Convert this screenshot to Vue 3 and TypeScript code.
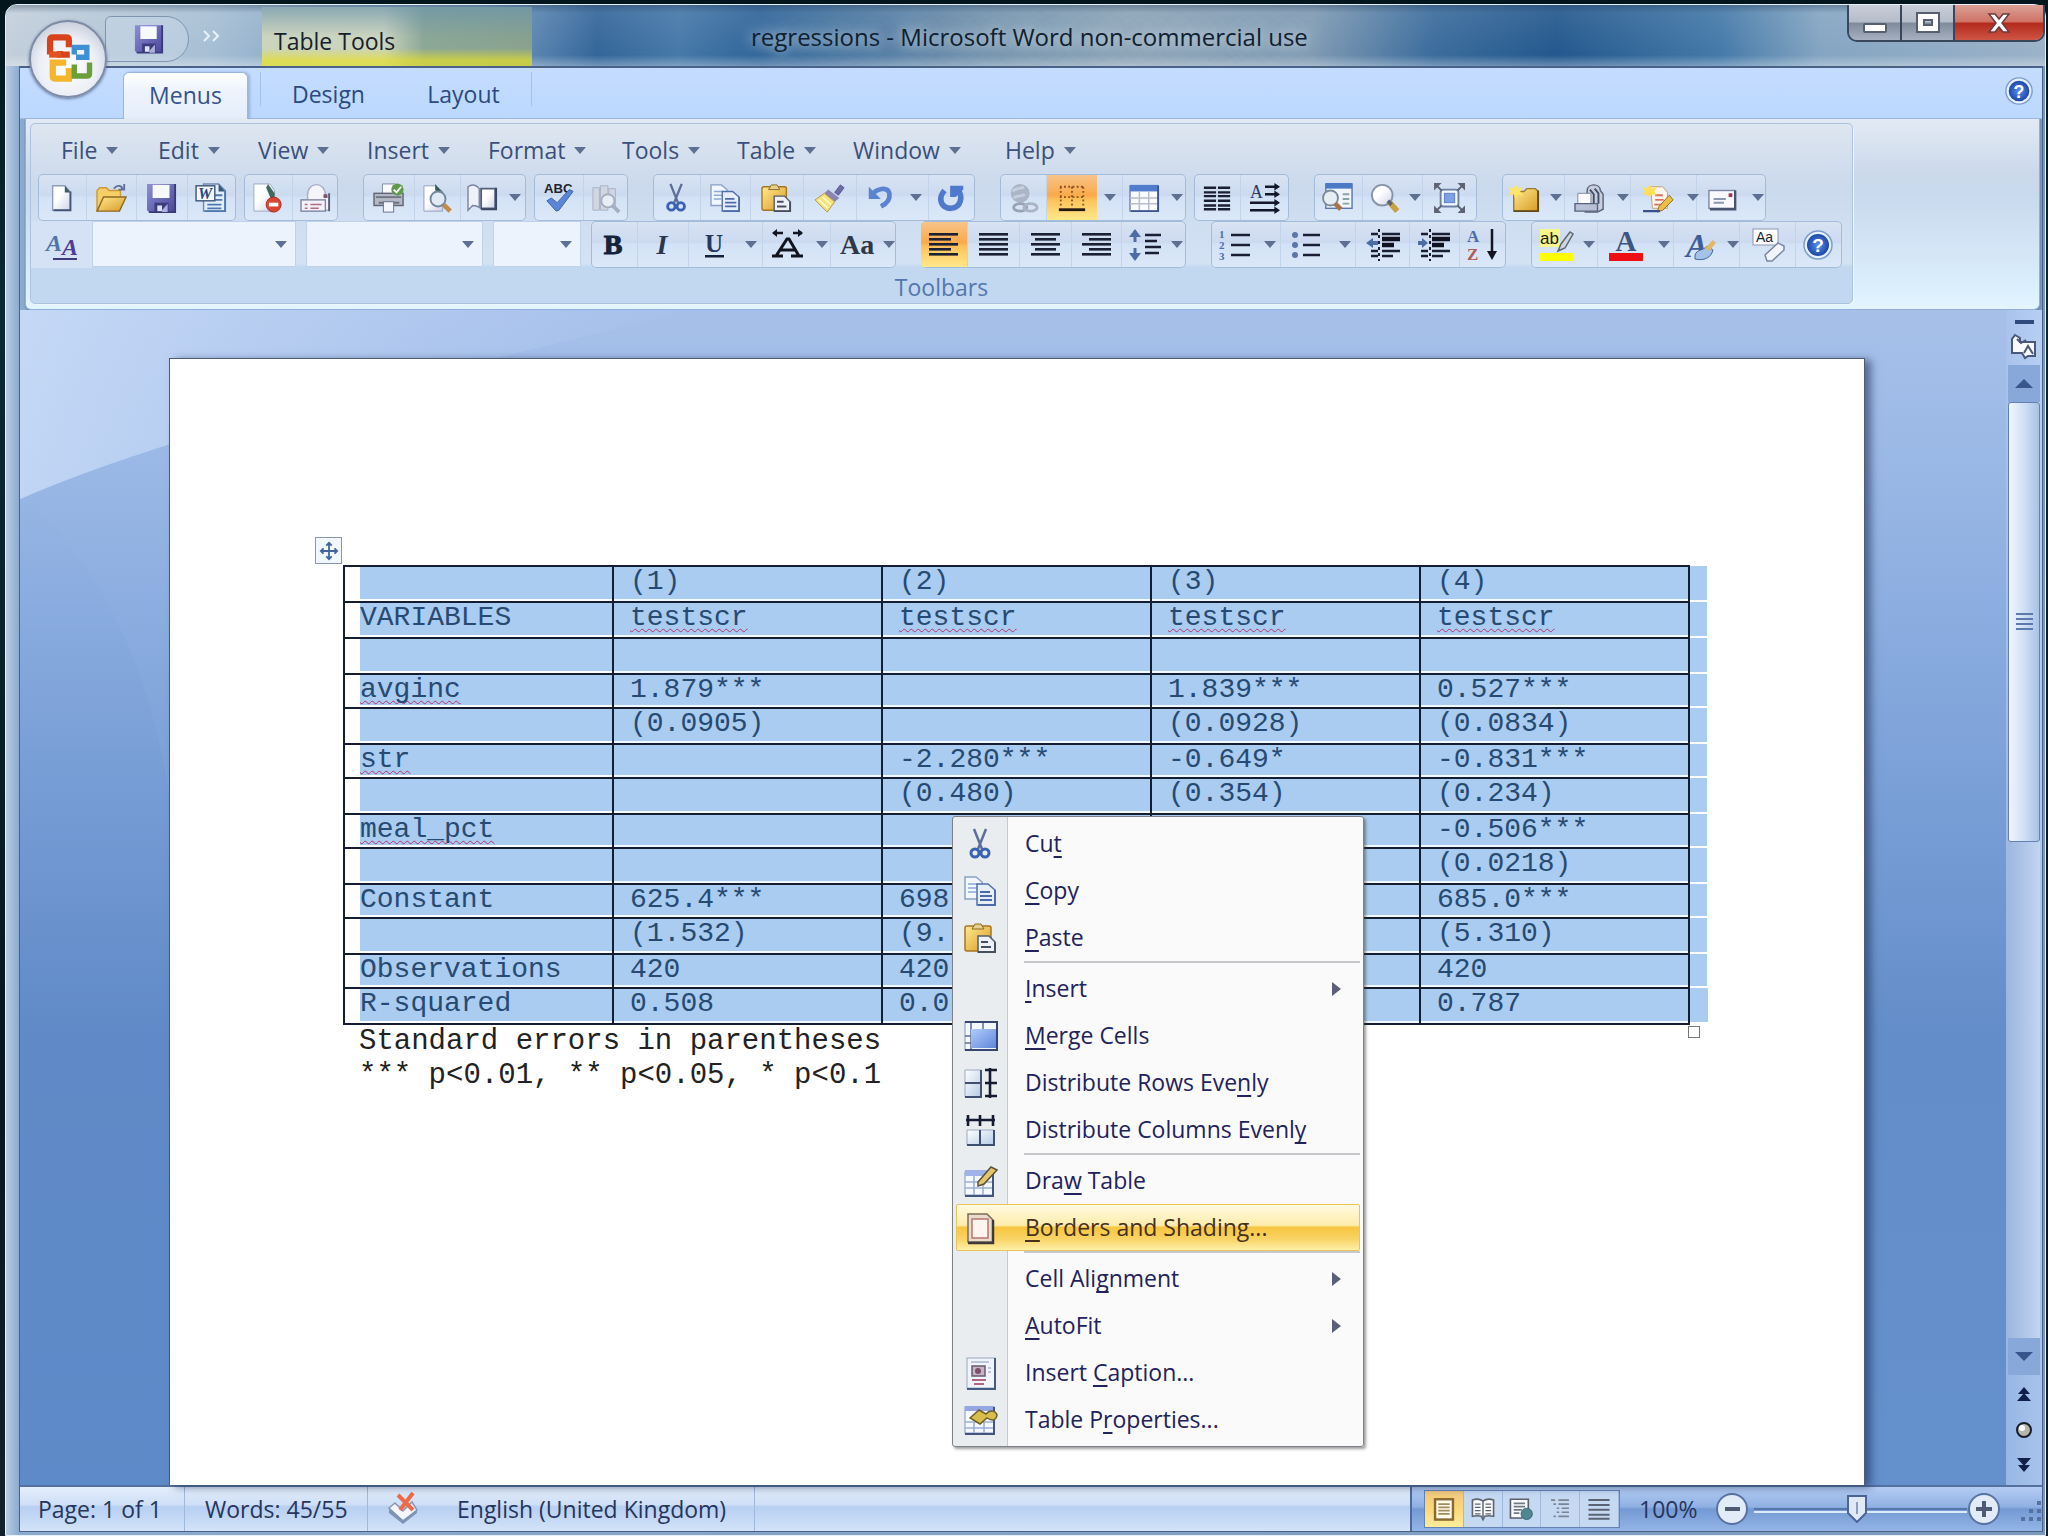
<script setup lang="ts">
import { ref } from 'vue'

interface Tool { icon?: string; label: string; w: number; drop?: boolean; on?: boolean }
type Segment = Tool[]

const drop = (label: string, w: number): Tool => ({ label, w, drop: true })
const tool = (icon: string, label: string, w: number, on = false): Tool => ({ icon, label, w, on })

const menus = [
  { label: 'File', w: 97 }, { label: 'Edit', w: 100 }, { label: 'View', w: 109 },
  { label: 'Insert', w: 121 }, { label: 'Format', w: 134 }, { label: 'Tools', w: 115 },
  { label: 'Table', w: 116 }, { label: 'Window', w: 152 }, { label: 'Help', w: 90 },
]

const standardBars: Segment[][] = [
  [
    [tool('page', 'New', 49), tool('folder', 'Open', 50), tool('disk', 'Save', 51), tool('word', 'Save As', 48)],
    [tool('permission', 'Permission', 49), tool('mail', 'E-mail', 45)],
  ],
  [
    [tool('printer', 'Print', 52), tool('preview', 'Print Preview', 46), tool('book', 'Reading', 43), drop('Reading options', 22)],
    [tool('spell', 'Spelling', 50), tool('research', 'Research', 44)],
  ],
  [[
    tool('cut', 'Cut', 48), tool('copy', 'Copy', 50), tool('paste', 'Paste', 53), tool('brush', 'Format Painter', 53),
    tool('undo', 'Undo', 46), drop('Undo list', 26), tool('redo', 'Repeat', 46),
  ]],
  [
    [tool('link', 'Hyperlink', 47), tool('borders', 'Borders', 50, true), drop('Border options', 26), tool('grid', 'Insert Table', 44), drop('Table options', 19)],
    [tool('columns', 'Columns', 47), tool('direction', 'Text Direction', 48)],
  ],
  [[tool('map', 'Document Map', 49), tool('zoom', 'Zoom', 45), drop('Zoom options', 15), tool('full', 'Full Screen', 54)]],
  [[
    tool('newfolder', 'New Group', 45), drop('Group options', 18), tool('stack', 'Print Batch', 50), drop('Batch options', 16),
    tool('newdoc', 'New Comment', 56), drop('Comment options', 10), tool('envelope', 'Envelope', 52), drop('Envelope options', 17),
  ]],
]

const formatBars: Segment[] = [
  [
    tool('bold', 'Bold', 47), tool('italic', 'Italic', 51), tool('underline', 'Underline', 51), drop('Underline style', 23),
    tool('scale', 'Character Scaling', 50), drop('Scaling options', 18), tool('case', 'Change Case', 50), drop('Case options', 15),
  ],
  [
    tool('left', 'Align Left', 47, true), tool('justify', 'Justify', 52), tool('center', 'Center', 52), tool('right', 'Align Right', 50),
    tool('spacing', 'Line Spacing', 45), drop('Spacing options', 19),
  ],
  [
    tool('numbers', 'Numbering', 48), drop('Numbering styles', 22), tool('bullets', 'Bullets', 53), drop('Bullet styles', 22),
    tool('outdent', 'Decrease Indent', 54), tool('indent', 'Increase Indent', 50), tool('sort', 'Sort', 46),
  ],
  [
    tool('highlight', 'Highlight', 49), drop('Highlight colors', 18), tool('color', 'Font Color', 56), drop('Font colors', 20),
    tool('style', 'Quick Styles', 52), drop('Style options', 14), tool('clear', 'Clear Formatting', 56), tool('help', 'Help', 46),
  ],
]

const combos = [
  { label: 'Style', w: 204 }, { label: 'Font', w: 177 }, { label: 'Font size', w: 88 },
]

const headRows = [
  ['', '(1)', '(2)', '(3)', '(4)'],
  ['VARIABLES', 'testscr', 'testscr', 'testscr', 'testscr'],
  ['', '', '', '', ''],
]
const bodyRows = [
  ['avginc', '1.879***', '', '1.839***', '0.527***'],
  ['', '(0.0905)', '', '(0.0928)', '(0.0834)'],
  ['str', '', '-2.280***', '-0.649*', '-0.831***'],
  ['', '', '(0.480)', '(0.354)', '(0.234)'],
  ['meal_pct', '', '', '', '-0.506***'],
  ['', '', '', '', '(0.0218)'],
  ['Constant', '625.4***', '698', '', '685.0***'],
  ['', '(1.532)', '(9.', '', '(5.310)'],
  ['Observations', '420', '420', '', '420'],
  ['R-squared', '0.508', '0.0', '', '0.787'],
]
const misspelt = new Set(['testscr', 'avginc', 'str', 'meal_pct'])

interface Entry { text: [string, string, string]; icon?: string; sub?: boolean; rule?: boolean; on?: boolean }
const entries: Entry[] = [
  { text: ['Cu', 't', ''], icon: 'cut' },
  { text: ['', 'C', 'opy'], icon: 'copy' },
  { text: ['', 'P', 'aste'], icon: 'paste' },
  { text: ['', 'I', 'nsert'], sub: true, rule: true },
  { text: ['', 'M', 'erge Cells'], icon: 'merge' },
  { text: ['Distribute Rows Eve', 'n', 'ly'], icon: 'rows' },
  { text: ['Distribute Columns Evenl', 'y', ''], icon: 'cols' },
  { text: ['Dra', 'w', ' Table'], icon: 'draw', rule: true },
  { text: ['', 'B', 'orders and Shading...'], icon: 'shading', on: true },
  { text: ['Cell Ali', 'g', 'nment'], sub: true, rule: true },
  { text: ['', 'A', 'utoFit'], sub: true },
  { text: ['Insert ', 'C', 'aption...'], icon: 'caption' },
  { text: ['Table P', 'r', 'operties...'], icon: 'props' },
]

const views = [
  { icon: 'vPrint', label: 'Print Layout', on: true },
  { icon: 'vRead', label: 'Full Screen Reading' },
  { icon: 'vWeb', label: 'Web Layout' },
  { icon: 'vOutline', label: 'Outline' },
  { icon: 'vDraft', label: 'Draft' },
]
const zoom = ref(48)

const bars = (rows: [number, number, number][]) =>
  rows.map(([x, y, w]) => `<rect x="${x}" y="${y}" width="${w}" height="2.6" fill="#1b2033"/>`).join('')
const ys = [4, 9, 14, 19, 24]

const icons: Record<string, string> = {
  page: '<path d="M7 3h13l6 7v19H7z" fill="url(#paper)" stroke="#8e9dbb" stroke-width="1.5"/><path d="M26 9v20H8" fill="none" stroke="#46557a" stroke-width="2"/><path d="M20 3l6 7h-6z" fill="#3f5c5f"/>',
  folder: '<path d="M1 30V8l3-3h7l3 3h12v7" fill="#f5cf66" stroke="#c99a37" stroke-width="1.500"/><path d="M1 30l7-15h24l-7 15z" fill="url(#gold)" stroke="#8d6a24" stroke-width="1.500"/><path d="M19 6c4-5 9-3 9 1m-4 0h6V1" fill="none" stroke="#5f6f99" stroke-width="2"/>',
  disk: '<path d="M1 1h30v30H3l-2-2z" fill="url(#violet)"/><path d="M31 1v30H3" fill="none" stroke="#3a3a78" stroke-width="2"/><rect x="7" y="2" width="18" height="14" fill="#f7f9ff"/><rect x="9" y="21" width="15" height="10" fill="#3d3c7e"/><rect x="12" y="24" width="5" height="6" fill="#dfe3f6"/><path d="M17 29l6-7v9h-6z" fill="#aab2dd"/>',
  word: '<path d="M8 1h16l7 7v22H8z" fill="#e3eefb" stroke="#6f8bb3" stroke-width="1.500"/><path d="M24 1v8h7" fill="#39577f"/><path d="M31 8v22H9M12 23h15M12 27h15M20 13h8M20 18h8" fill="none" stroke="#4e78ad" stroke-width="2"/><rect x="0" y="3" width="20" height="16" fill="#f4f7ff" stroke="#3c5579" stroke-width="1.500"/><text x="2" y="17" font-family="Liberation Serif" font-size="17" font-weight="700" font-style="italic" fill="#26477b">W</text>',
  permission: '<path d="M2 1h17l5 7v22H2z" fill="url(#paper)" stroke="#9aa8c2"/><path d="M17 1l7 10v8h-3l-6-14z" fill="#3f6a60"/><circle cx="23" cy="23" r="8" fill="#da4636" stroke="#a62a22"/><rect x="18" y="21" width="10" height="4" fill="#fff"/>',
  mail: '<path d="M8 13c0-15 19-15 19 0l4 3v13H8z" fill="#f5f4f8" stroke="#a8aec4" stroke-width="1.500"/><path d="M31 11v19" stroke="#565d78" stroke-width="2"/><rect x="25" y="12" width="4" height="4" fill="#7c5568"/><rect x="1" y="18" width="26" height="12" fill="#f2f2f9" stroke="#7d86a2" stroke-width="1.500"/><path d="M5 23h3M11 23h12M5 27h3M11 27h9" stroke="#b06d85" stroke-width="1.600"/>',
  printer: '<path d="M10 12V1h14v11" fill="#fbfcff" stroke="#7e879b"/><rect x="1" y="11" width="31" height="13" fill="#b4b8c2" stroke="#5f6572" stroke-width="1.500"/><path d="M3 15h27M6 21h22" stroke="#6c7280" stroke-width="2"/><rect x="11" y="20" width="11" height="11" fill="#f4f6fd" stroke="#62708f"/><circle cx="26" cy="7" r="6.500" fill="#5d9b4c"/><path d="M22 7l3 3 5-6" fill="none" stroke="#fff" stroke-width="2"/>',
  preview: '<path d="M2 3h12l8 6v21H2z" fill="url(#paper)" stroke="#8e9dbb"/><path d="M14 1l8 9-8-2z" fill="#335a52"/><circle cx="17" cy="17" r="8" fill="#dfeaf6" stroke="#74869c" stroke-width="2"/><path d="M23 23l7 7" stroke="#c48b46" stroke-width="5"/>',
  book: '<path d="M1 4c5-4 10-1 12 2v20c-3-2-5-2-7-2l-5 5z" fill="#eff1f8" stroke="#7b84a0" stroke-width="1.500"/><path d="M15 6h15v21H15z" fill="url(#paper)" stroke="#555e7c" stroke-width="2"/><path d="M31 5v23H15" fill="none" stroke="#3c4564" stroke-width="2"/>',
  spell: '<text x="1" y="11" font-family="Liberation Sans" font-size="14" font-weight="700" fill="#1e2430">ABC</text><path d="M4 19l5-3 6 5L28 7l4 2-15 20-3 1z" fill="#5b86d6" stroke="#3d62ad"/>',
  research: '<path d="M3 5h7v24H3zM11 3h8v26h-8zM20 6h7v20h-7z" fill="#d0d6e2" stroke="#a9b2c4"/><circle cx="19" cy="19" r="7" fill="#e8edf6" stroke="#a6afc0" stroke-width="2"/><path d="M24 24l7 7" stroke="#a6afc0" stroke-width="4"/>',
  cut: '<path d="M10 1l8 20M22 1l-8 20" stroke="#5c6f98" stroke-width="2.500"/><circle cx="11" cy="25" r="4" fill="none" stroke="#3b62b2" stroke-width="3"/><circle cx="21" cy="25" r="4" fill="none" stroke="#3b62b2" stroke-width="3"/>',
  copy: '<path d="M1 2h11l6 5v17H1z" fill="#f2f6ff" stroke="#8ba0c9" stroke-width="1.500"/><path d="M4 9h10M4 13h10M4 17h8" stroke="#8fa9d8" stroke-width="1.500"/><path d="M13 9h11l7 6v15H13z" fill="#e6eefc" stroke="#506fa8" stroke-width="1.500"/><path d="M31 15v15H14M16 17h10M16 21h12M16 25h12" fill="none" stroke="#4b6ba8" stroke-width="1.800"/>',
  paste: '<rect x="1" y="4" width="26" height="25" rx="2" fill="url(#gold)" stroke="#a8751f" stroke-width="1.500"/><path d="M8 7l3-5h6l3 5z" fill="#e6cf8d" stroke="#8d6a24"/><path d="M14 14h11l6 6v10H14z" fill="#eef2f8" stroke="#535f6c" stroke-width="1.500"/><path d="M31 20v10H14M17 20h7M17 25h10" fill="none" stroke="#45505c" stroke-width="2"/>',
  brush: '<path d="M22 10l6-8 4 3-6 8z" fill="#6c6ba6" stroke="#585a90"/><path d="M15 7l12 9-5 4-11-9z" fill="#8885b5"/><path d="M11 11l11 9-8 11L1 18z" fill="#f4e27c" stroke="#b1953d"/><path d="M5 18l10 9M9 15l9 8" stroke="#fff6bd" stroke-width="2"/>',
  undo: '<path d="M5 4v13h13z" fill="#5c83cf"/><path d="M8 13c5-7 17-10 19-2 1 6-3 11-9 14" fill="none" stroke="#5c83cf" stroke-width="5"/>',
  redo: '<path d="M9 8c-8 9-3 19 7 19 11-1 13-13 7-20" fill="none" stroke="#5079cc" stroke-width="6"/><path d="M15 3h14v4l-8 8h-6z" fill="#5079cc"/>',
  link: '<circle cx="14" cy="11" r="10" fill="#aab5c8"/><path d="M6 9c4-5 8-2 12-5M7 16c3-3 8-1 12-4" stroke="#c8d0de" stroke-width="3" fill="none"/><ellipse cx="14" cy="26" rx="7" ry="4" fill="none" stroke="#98a3b8" stroke-width="3"/><ellipse cx="25" cy="26" rx="7" ry="4" fill="none" stroke="#aab4c6" stroke-width="3"/>',
  borders: '<path d="M4 4h26M4 15h26M5 4v22M17 4v22M29 4v22" stroke="#8a5320" stroke-width="2" stroke-dasharray="2 2.500"/><rect x="3" y="27" width="28" height="3" fill="#21180f"/>',
  grid: '<rect x="1" y="3" width="30" height="27" fill="#fbfcff" stroke="#6c83ad" stroke-width="1.500"/><rect x="1" y="2" width="30" height="7" fill="#4f7ccb"/><path d="M1 16h30M1 22h30M11 9v20M21 9v20" stroke="#b9bdd0" stroke-width="1.600"/><path d="M31 3v27H2" fill="none" stroke="#3d558b" stroke-width="2"/>',
  columns: [5, 10, 14, 19, 24, 28].map(y => `<path d="M3 ${y}h13M18 ${y}h13" stroke="#1a1f33" stroke-width="2.600"/>`).join(''),
  direction: '<text x="1" y="16" font-family="Liberation Serif" font-size="19" fill="#2e3a60">A</text><path d="M17 4h14M17 12h14M1 21h30M1 29h30" stroke="#12172a" stroke-width="2.600"/><path d="M27 0l6 4-6 4zM27 8l6 4-6 4zM27 17l6 4-6 4zM27 25l6 4-6 4z" fill="#12172a"/>',
  map: '<rect x="4" y="1" width="28" height="26" fill="#f0f5fd" stroke="#5a76ab" stroke-width="1.500"/><rect x="4" y="0" width="28" height="6" fill="#4b79c6"/><path d="M22 12h7M22 17h7M22 22h7" stroke="#86a4a0" stroke-width="2"/><circle cx="9" cy="16" r="8" fill="#e6eef4" stroke="#7a8c99" stroke-width="2"/><path d="M14 22l6 6" stroke="#a8744c" stroke-width="5"/>',
  zoom: '<circle cx="13" cy="13" r="11" fill="url(#paper)" stroke="#8694a8" stroke-width="2"/><path d="M21 21l8 9" stroke="#c9a141" stroke-width="6"/><path d="M19 19l4 4" stroke="#5f6470" stroke-width="4"/>',
  full: '<rect x="7" y="7" width="19" height="18" rx="3" fill="#f3f7ff" stroke="#6c7fa4" stroke-width="2"/><rect x="11" y="11" width="11" height="10" fill="#7ea1e6" stroke="#5b7dc4"/><path d="M0 0h8L0 8zM33 0h-8l8 8zM0 32h8l-8-8zM33 32h-8l8-8z" fill="#5d6373"/><path d="M2 2l6 6M31 2l-6 6M2 30l6-6M31 30l-6-6" stroke="#5d6373" stroke-width="2"/>',
  newfolder: '<path d="M5 9h11l3-3h9l3 3v21H5z" fill="url(#gold)" stroke="#9b7a2d" stroke-width="1.500"/><path d="M31 8v22H5" fill="none" stroke="#5e4a1a" stroke-width="2"/><path d="M7 0l2 6 6-2-3 5 3 5-6-2-2 5-2-5-6 2 3-5-3-5 6 2z" fill="#ffe56a"/>',
  stack: '<path d="M14 8c0-8 14-8 14 0l3 4v16l-6 3H12z" fill="#c8cede" stroke="#58617a" stroke-width="1.500"/><path d="M4 11h14v12H4z" fill="#fdfdff" stroke="#7a849d"/><path d="M17 7l4 5v11M22 6l4 5v11" stroke="#424c66" stroke-width="2" fill="none"/><path d="M1 22h24v8H1z" fill="#b7c0d6" stroke="#59637c" stroke-width="1.500"/>',
  newdoc: '<path d="M8 4h13l5 6v17H10z" fill="#fdf4ee" stroke="#c39c7c"/><path d="M13 13h8M13 18h9M12 23h7" stroke="#d9725f" stroke-width="2"/><path d="M28 13l4 5-11 11-6 2 2-6z" fill="#edbf45" stroke="#8d6a24"/><path d="M7 0l2 6 6-2-3 5 3 4-6-1-2 4-2-4-5 1 2-4-3-5 6 2z" fill="#ffdf55"/><path d="M0 30h18" stroke="#38508c" stroke-width="2.500"/>',
  envelope: '<rect x="2" y="8" width="28" height="19" fill="#f9f9ff" stroke="#7c86a4" stroke-width="1.500"/><path d="M30 8v20H3" fill="none" stroke="#4a536f" stroke-width="2.500"/><path d="M7 17h13M7 21h11" stroke="#8d97b4" stroke-width="2"/><rect x="23" y="11" width="4" height="4" fill="#9c3854"/>',
  bold: '<text x="16" y="25" text-anchor="middle" font-family="Liberation Serif" font-size="28" font-weight="700" fill="#14233c" stroke="#14233c">B</text>',
  italic: '<text x="16" y="25" text-anchor="middle" font-family="Liberation Serif" font-size="28" font-style="italic" font-weight="700" fill="#2b3650">I</text>',
  underline: '<text x="16" y="23" text-anchor="middle" font-family="Liberation Serif" font-size="25" font-weight="700" fill="#26385a">U</text><rect x="7" y="26" width="19" height="2.500" fill="#14233c"/>',
  scale: '<path d="M1 27h11M20 27h12M5 27L16 10h2l10 17M9 21h15" fill="none" stroke="#12151f" stroke-width="3"/><path d="M3 4h9M22 4h9" stroke="#12151f" stroke-width="2.500"/><path d="M6 0L1 4l5 4zM27 0l5 4-5 4z" fill="#12151f"/>',
  case: '<text x="1" y="25" font-family="Liberation Serif" font-size="28" font-weight="700" fill="#303848">Aa</text>',
  left: bars(ys.map((y, i) => [2, y, i % 2 ? 22 : 29])),
  justify: bars(ys.map(y => [2, y, 29])),
  center: bars(ys.map((y, i) => (i % 2 ? [6, y, 21] : [2, y, 29]))),
  right: bars(ys.map((y, i) => (i % 2 ? [9, y, 22] : [2, y, 29]))),
  spacing: '<path d="M7 2v11M7 19v11" stroke="#4d6ca6" stroke-width="3"/><path d="M7 0l6 8H1zM7 32l6-8H1z" fill="#4d6ca6"/><path d="M17 6h16M17 12h12M17 18h16M17 24h14" stroke="#1a1f33" stroke-width="2.600"/>',
  numbers: '<g font-family="Liberation Serif" font-weight="700" font-size="11" fill="#4e6ca6"><text x="1" y="9">1</text><text x="1" y="20">2</text><text x="1" y="31">3</text></g><path d="M13 6h19M13 16h19M13 26h19" stroke="#1a1f33" stroke-width="2.600"/>',
  bullets: '<g fill="#5d76a8"><circle cx="4" cy="6" r="3"/><circle cx="4" cy="16" r="3"/><circle cx="4" cy="26" r="3"/></g><path d="M12 6h17M12 16h17M12 26h17" stroke="#1a1f33" stroke-width="2.600"/>',
  outdent: '<path d="M5 5h7M5 22h7M5 27h7M16 5h18M16 22h18M16 27h11" stroke="#1a1f33" stroke-width="2.400"/><path d="M16 10h18M16 16h12" stroke="#10131f" stroke-width="4.500"/><path d="M13 0v32" stroke="#1a1f33" stroke-width="2" stroke-dasharray="3 3"/><path d="M0 14l7-5v3h5v4H7v3z" fill="#4d6ca6"/>',
  indent: '<path d="M3 5h7M3 22h7M3 27h7M14 5h18M14 22h18M14 27h11" stroke="#1a1f33" stroke-width="2.400"/><path d="M14 10h18M14 16h12" stroke="#10131f" stroke-width="4.500"/><path d="M12 0v32" stroke="#1a1f33" stroke-width="2" stroke-dasharray="3 3"/><path d="M10 14L4 9v3H0v4h4v3z" fill="#4d6ca6"/>',
  sort: '<g font-family="Liberation Serif" font-weight="700" font-size="17"><text x="1" y="13" fill="#4d6ca6">A</text><text x="1" y="31" fill="#b35b57">Z</text></g><path d="M26 0v24" stroke="#12151f" stroke-width="2.500"/><path d="M21 22h10l-5 9z" fill="#12151f"/>',
  highlight: '<rect x="1" y="0" width="20" height="18" fill="#f8f58a"/><text x="1" y="15" font-family="Liberation Sans" font-size="17" fill="#17170a">ab</text><path d="M22 15l9-12 3 2-8 14-7 3z" fill="#cfd6dc" stroke="#5b6a72" stroke-width="1.500"/><rect x="1" y="24" width="33" height="8" fill="#ffff00"/>',
  color: '<text x="17" y="22" text-anchor="middle" font-family="Liberation Serif" font-size="29" font-weight="700" fill="#3d5583">A</text><rect x="0" y="24" width="34" height="8" fill="#ee0f14"/>',
  style: '<text x="14" y="28" text-anchor="middle" font-family="Liberation Serif" font-size="33" font-style="italic" font-weight="700" fill="#3e5d98">A</text><path d="M12 26c2-6 8-4 12-9l6 4c-2 8-9 11-18 9z" fill="#a5c2e8" stroke="#446595"/><path d="M22 19l8-8 3 3-7 8z" fill="#e2b765"/>',
  clear: '<rect x="2" y="0" width="25" height="16" fill="#fff" stroke="#8a95b1"/><text x="5" y="13" font-family="Liberation Sans" font-size="14" fill="#1c2232">Aa</text><path d="M14 26l13-12 6 3v4L21 32h-5z" fill="#f1f4fb" stroke="#7a859e" stroke-width="1.500"/>',
  help: '<circle cx="16" cy="16" r="14" fill="#e6f1ff" stroke="#7d9dcc" stroke-width="1.500"/><circle cx="16" cy="16" r="11" fill="url(#orb)"/><text x="16" y="23" text-anchor="middle" font-family="Liberation Sans" font-size="19" font-weight="700" fill="#fff">?</text>',
  styles: '<g font-family="Liberation Serif" font-size="24" font-style="italic" font-weight="700"><text x="1" y="22" fill="#4e74a8">A</text><text x="17" y="26" fill="#4e3b96">A</text></g><rect x="8" y="29" width="24" height="2" fill="#3f3b7c"/>',
  merge: '<rect x="1" y="2" width="32" height="28" fill="#f4f7fd" stroke="#8194b8"/><path d="M7 2v28M19 2v8M1 16h6M1 23h6" stroke="#5b6f97" stroke-width="1.500"/><rect x="7" y="9" width="25" height="19" fill="url(#blue)"/><path d="M1 2h32v28H1" fill="none" stroke="#34466f" stroke-width="2"/>',
  rows: '<path d="M1 3h16v27H1z" fill="url(#pale)" stroke="#9aa9c1"/><path d="M1 16h16M17 3v27H1" fill="none" stroke="#3f4f70" stroke-width="2"/><path d="M26 1v30M21 3h12M21 16h12M21 29h12" stroke="#141b33" stroke-width="2.600"/>',
  cols: '<path d="M3 16h27v15H3z" fill="url(#pale)" stroke="#9aa9c1"/><path d="M16 16v15M30 16v15H3" fill="none" stroke="#3f4f70" stroke-width="2"/><path d="M2 6h29M4 1v11M16 1v11M29 1v11" stroke="#141b33" stroke-width="2.600"/>',
  draw: '<rect x="1" y="7" width="28" height="23" fill="#f6f9ff" stroke="#8295bd"/><rect x="1" y="5" width="28" height="6" fill="#9fb2ea"/><path d="M1 17h28M1 23h28M10 11v19M19 11v19" stroke="#9db0d6" stroke-width="1.600"/><path d="M29 8v23H1" fill="none" stroke="#43557f" stroke-width="2"/><path d="M14 17L27 2l6 3-13 14-6 2z" fill="#e3c66c" stroke="#5b5136" stroke-width="1.500"/>',
  shading: '<path d="M4 2h19l6 6v22H4z" fill="#e8dccb" stroke="#7d6b5a" stroke-width="1.500"/><path d="M29 8v23H4" fill="none" stroke="#3f3a3a" stroke-width="2.500"/><rect x="8" y="7" width="16" height="19" fill="#fff4ee" stroke="#b9746c" stroke-width="1.500"/>',
  caption: '<rect x="3" y="1" width="28" height="30" fill="#f1f5fb" stroke="#97a6c2"/><path d="M31 1v31H3" fill="none" stroke="#465b80" stroke-width="2"/><rect x="8" y="9" width="13" height="10" fill="#c3b5c4" stroke="#6a5a70" stroke-width="1.500"/><circle cx="14" cy="14" r="3" fill="#7d4f6a"/><path d="M8 23h14M10 27h10" stroke="#b0667e" stroke-width="2"/><path d="M7 5h18M24 11h3M24 15h3" stroke="#a9b7cf" stroke-width="1.500"/>',
  props: '<rect x="1" y="3" width="29" height="26" fill="#f6f9ff" stroke="#8295bd"/><rect x="1" y="2" width="29" height="5" fill="#95a6e4"/><path d="M1 18h29M1 24h29M10 18v11M20 18v11" stroke="#9db0d6" stroke-width="1.600"/><path d="M30 3v27H1" fill="none" stroke="#43557f" stroke-width="2"/><path d="M6 14l9-8 7 4c4-5 10-3 11 1-1 7-7 5-10 3l-7 6z" fill="#d9bd4b" stroke="#6c5f28" stroke-width="1.500"/>',
  proof: '<path d="M3 16l6-5 8 8 9-9 5 8-14 11z" fill="#f3f6fc" stroke="#8797b4" stroke-width="1.500"/><path d="M3 17v4l14 11 14-11v-3L17 28z" fill="#7e93b5"/><path d="M12 3l15 15M27 1L14 18" stroke="#ee6a48" stroke-width="4"/>',
  vPrint: '<rect x="5" y="4" width="22" height="25" fill="#fffbe8" stroke="#8b6a35" stroke-width="3"/><path d="M9 10h14M9 14h14M9 18h14M9 22h14" stroke="#a28a5c" stroke-width="2"/>',
  vRead: '<path d="M3 5c5-2 10-1 13 1 3-2 8-3 13-1v20c-5-1-8-1-11 0l-2 4-2-4c-3-1-6-1-11 0z" fill="#fdfdfd" stroke="#5d6471" stroke-width="2"/><path d="M16 6v20M6 10h7M6 14h7M6 18h7M6 22h7M19 10h7M19 14h7M19 18h7M19 22h7" stroke="#5d6471" stroke-width="1.800"/>',
  vWeb: '<path d="M3 4h22v14l-8 9H3z" fill="#fafcff" stroke="#59606e" stroke-width="2"/><path d="M7 9h14M7 13h14M7 17h10M7 21h7" stroke="#727a89" stroke-width="2"/><circle cx="23" cy="22" r="7" fill="#4f8690" stroke="#3a5f76"/>',
  vOutline: '<path d="M5 5h5M14 5h13M8 10h3M14 10h13M12 15h3M18 15h9M12 20h3M18 20h9M8 25h3M14 25h13" stroke="#7b8494" stroke-width="2"/>',
  vDraft: '<path d="M3 5h26M3 11h26M3 17h26M3 23h26M3 28h26" stroke="#5b6474" stroke-width="2.500"/>',
}
</script>

<template>
  <div class="desktop">
    <svg class="defs" aria-hidden="true">
      <defs>
        <linearGradient id="paper" x2="1" y2="1"><stop offset=".4" stop-color="#fff" /><stop offset="1" stop-color="#cdd3e8" /></linearGradient>
        <linearGradient id="gold" x2="1" y2="1"><stop offset="0" stop-color="#ffe98f" /><stop offset="1" stop-color="#d79b25" /></linearGradient>
        <linearGradient id="violet" x2="1" y2="1"><stop offset="0" stop-color="#8c8fd6" /><stop offset="1" stop-color="#4a479a" /></linearGradient>
        <linearGradient id="blue" x2="1" y2="1"><stop offset="0" stop-color="#b3ccff" /><stop offset="1" stop-color="#5e86d8" /></linearGradient>
        <linearGradient id="pale" x2="1" y2="1"><stop offset="0" stop-color="#fff" /><stop offset="1" stop-color="#b6cbe6" /></linearGradient>
        <radialGradient id="orb"><stop offset="0" stop-color="#5a8ff0" /><stop offset="1" stop-color="#1d47a8" /></radialGradient>
      </defs>
    </svg>

    <div class="window">
      <header class="titlebar">
        <button class="office" aria-label="Office Button">
          <svg viewBox="0 0 58 60" width="52" height="54" fill="none" stroke-width="7">
            <path d="M31 25H20V21M9 25V9q0-3 3-3h15q3 0 3 3v8" stroke="#d8431c" />
            <path d="M8 25h13" stroke="#e2531f" />
            <path d="M36 25V17h14v11H38" stroke="#3e8fd6" stroke-width="6" />
            <path d="M27 34H12v15q0 3 3 3h15V40" stroke="#f5b52c" />
            <path d="M36 36v13h15q2 0 2-3V34" stroke="#6a9f3c" stroke-width="6" />
          </svg>
        </button>
        <div class="quick">
          <button aria-label="Save"><svg viewBox="0 0 33 32" width="30" height="30" v-html="icons.disk" /></button>
        </div>
        <button class="more" aria-label="Customize Quick Access Toolbar">
          <svg viewBox="0 0 20 12" width="20" height="12" fill="none" stroke="#e9f1f9" stroke-width="2"><path d="M2 1l5 5-5 5M11 1l5 5-5 5" /></svg>
        </button>
        <div class="context">Table Tools</div>
        <h1>regressions - Microsoft Word non-commercial use</h1>
        <div class="controls">
          <button aria-label="Minimize"><svg viewBox="0 0 28 24" width="28" height="24"><rect x="3" y="13" width="22" height="8" rx="1" fill="#fff" stroke="#56606e" stroke-width="2" /></svg></button>
          <button aria-label="Restore"><svg viewBox="0 0 28 24" width="28" height="24"><path d="M3 2h22v19H3zM10 9v5h8V9z" fill="#fff" fill-rule="evenodd" stroke="#56606e" stroke-width="2" /></svg></button>
          <button class="close" aria-label="Close"><svg viewBox="0 0 28 24" width="28" height="24"><path d="M4 3h6l4 5 4-5h6l-7 9 7 9h-6l-4-5-4 5H4l7-9z" fill="#fff" stroke="#6e3a3c" stroke-width="1.500" /></svg></button>
        </div>
      </header>

      <div class="client">
        <nav class="tabs" aria-label="Ribbon tabs">
          <button class="tab active">Menus</button>
          <div class="toolTabs">
            <button class="tab">Design</button>
            <button class="tab">Layout</button>
          </div>
          <button class="helpBtn" aria-label="Help"><svg viewBox="0 0 32 32" width="30" height="30" v-html="icons.help" /></button>
        </nav>

        <section class="ribbon">
          <div class="group">
            <div class="menubar">
              <button v-for="m in menus" :key="m.label" :style="{ width: m.w + 'px' }">{{ m.label }}<i class="tri" /></button>
            </div>
            <div class="toolrow">
              <div v-for="(bar, b) in standardBars" :key="b" class="bar">
                <div v-for="(seg, s) in bar" :key="s" class="segment">
                  <button v-for="t in seg" :key="t.label" :aria-label="t.label" :class="{ on: t.on, drop: t.drop }" :style="{ width: t.w + 'px' }">
                    <i v-if="t.drop" class="tri" />
                    <svg v-else viewBox="0 0 34 32" width="32" height="30" v-html="icons[t.icon!]" />
                  </button>
                </div>
              </div>
            </div>
            <div class="toolrow second">
              <button class="stylesBtn" aria-label="Styles"><svg viewBox="0 0 34 32" width="34" height="32" v-html="icons.styles" /></button>
              <div class="bar combos">
                <label v-for="c in combos" :key="c.label" :style="{ width: c.w + 'px' }">
                  <select :aria-label="c.label"><option /></select><i class="tri" />
                </label>
                <div class="segment">
                  <button v-for="t in formatBars[0]" :key="t.label" :aria-label="t.label" :class="{ drop: t.drop }" :style="{ width: t.w + 'px' }">
                    <i v-if="t.drop" class="tri" />
                    <svg v-else viewBox="0 0 34 32" width="34" height="32" v-html="icons[t.icon!]" />
                  </button>
                </div>
              </div>
              <div v-for="(seg, s) in formatBars.slice(1)" :key="s" class="segment">
                <button v-for="t in seg" :key="t.label" :aria-label="t.label" :class="{ on: t.on, drop: t.drop }" :style="{ width: t.w + 'px' }">
                  <i v-if="t.drop" class="tri" />
                  <svg v-else viewBox="0 0 34 32" width="34" height="32" v-html="icons[t.icon!]" />
                </button>
              </div>
            </div>
            <div class="caption">Toolbars</div>
          </div>
        </section>

        <main class="workspace">
          <svg class="swoosh" viewBox="0 0 1000 1180" preserveAspectRatio="none" aria-hidden="true">
            <defs>
              <linearGradient id="sheen" x2="1" y2="0"><stop offset="0" stop-color="#cfe0fa" stop-opacity=".75" /><stop offset="1" stop-color="#c3d8f8" stop-opacity="0" /></linearGradient>
              <linearGradient id="deep" x2="0" y2="1"><stop offset="0" stop-color="#4f7dbf" stop-opacity="0" /><stop offset="1" stop-color="#4f7dbf" stop-opacity=".3" /></linearGradient>
            </defs>
            <path d="M0 0H330C220 60 90 110 0 190z" fill="url(#sheen)" />
            <path d="M0 180C60 300 90 460 75 800L75 1180H0z" fill="url(#deep)" />
          </svg>
          <article class="page">
            <div class="sheet">
              <button class="move" aria-label="Move table">
                <svg viewBox="0 0 22 22" width="20" height="20" stroke="#42669c" stroke-width="2" fill="none"><path d="M11 2v18M2 11h18M8 5l3-3 3 3M8 17l3 3 3-3M5 8l-3 3 3 3M17 8l3 3-3 3" /></svg>
              </button>
              <table>
                <thead>
                  <tr v-for="(r, i) in headRows" :key="i">
                    <th v-for="(c, j) in r" :key="j" scope="col"><span :class="{ wavy: misspelt.has(c) }">{{ c }}</span></th>
                    <td class="tail" />
                  </tr>
                </thead>
                <tbody>
                  <tr v-for="(r, i) in bodyRows" :key="i">
                    <td v-for="(c, j) in r" :key="j"><span :class="{ wavy: misspelt.has(c) }">{{ c }}</span></td>
                    <td class="tail" />
                  </tr>
                </tbody>
              </table>
              <i class="resize" />
            </div>
            <p class="note">Standard errors in parentheses<br>*** p&lt;0.01, ** p&lt;0.05, * p&lt;0.1</p>

            <div class="menu" role="menu">
              <button v-for="(e, i) in entries" :key="i" role="menuitem" :class="{ rule: e.rule, on: e.on }">
                <span class="glyph"><svg v-if="e.icon" viewBox="0 0 34 32" width="34" height="32" v-html="icons[e.icon]" /></span>
                <span class="text">{{ e.text[0] }}<u>{{ e.text[1] }}</u>{{ e.text[2] }}</span>
                <i v-if="e.sub" class="arrow" />
              </button>
            </div>
          </article>

          <aside class="scroll" aria-label="Vertical scroll bar">
            <i class="split" />
            <button aria-label="View Ruler"><svg viewBox="0 0 28 26" width="28" height="26"><path d="M5 2l5 3v4h15v14h-7l-3 2-3-5H2V6z" fill="#f8f9fd" stroke="#4a587a" stroke-width="2" /><path d="M7 6l4 4 5-3M14 20l4-7 5 8" fill="none" stroke="#4a587a" stroke-width="2" /></svg></button>
            <button class="step" aria-label="Scroll up"><i class="up" /></button>
            <div class="lane"><div class="thumb"><i /><i /><i /><i /></div></div>
            <button class="step" aria-label="Scroll down"><i class="down" /></button>
            <div class="browse">
              <button aria-label="Previous Page"><svg viewBox="0 0 14 14" width="14" height="14"><path d="M7 0l6 7H1zM7 6l7 8H0z" fill="#10204a" /></svg></button>
              <button aria-label="Select Browse Object"><svg viewBox="0 0 18 18" width="18" height="18"><circle cx="9" cy="9" r="7" fill="#b7b6ae" stroke="#181d2b" stroke-width="2" /><circle cx="7" cy="7" r="3" fill="#fff" /></svg></button>
              <button aria-label="Next Page"><svg viewBox="0 0 14 14" width="14" height="14"><path d="M7 14l6-7H1zM7 8l7-8H0z" fill="#10204a" /></svg></button>
            </div>
          </aside>
        </main>

        <footer class="status">
          <div class="info">
            <span class="cell pages">Page: 1 of 1</span>
            <span class="cell words">Words: 45/55</span>
            <span class="cell lang"><svg viewBox="0 0 34 34" width="36" height="34" v-html="icons.proof" />English (United Kingdom)</span>
          </div>
          <div class="right">
            <div class="views">
              <button v-for="v in views" :key="v.icon" :aria-label="v.label" :class="{ on: v.on }"><svg viewBox="0 0 32 32" width="26" height="26" v-html="icons[v.icon]" /></button>
            </div>
            <output for="zoom">100%</output>
            <button class="round" aria-label="Zoom out"><svg viewBox="0 0 34 34" width="34" height="34"><circle cx="17" cy="17" r="15" fill="#e2ecf9" stroke="#5873a3" stroke-width="2" /><rect x="10" y="15" width="15" height="4" fill="#4f5b74" /></svg></button>
            <input id="zoom" v-model.number="zoom" type="range" min="0" max="100" aria-label="Zoom">
            <button class="round" aria-label="Zoom in"><svg viewBox="0 0 34 34" width="34" height="34"><circle cx="17" cy="17" r="15" fill="#e2ecf9" stroke="#5873a3" stroke-width="2" /><path d="M17 9v16M9 17h16" stroke="#4f5b74" stroke-width="4" /></svg></button>
            <svg class="grip" viewBox="0 0 24 24" width="24" height="24" fill="#56719f"><path d="M19 2h4v4h-4zM11 10h4v4h-4zM19 10h4v4h-4zM3 18h4v4H3zM11 18h4v4h-4zM19 18h4v4h-4z" /></svg>
          </div>
        </footer>
      </div>
    </div>
  </div>
</template>

<style>
html, body { margin: 0; }
</style>

<style scoped>
* { box-sizing: border-box; }
button { appearance: none; border: 0; padding: 0; margin: 0; background: none; font: inherit; color: inherit; }
svg { display: block; flex: none; overflow: visible; }
.defs { position: absolute; width: 0; height: 0; }

.desktop {
  min-height: 100vh; display: flex; padding: 4px 2px 0 5px;
  background: linear-gradient(#03161d, #0b2a33 20%, #07161f 70%, #11202b);
  font: 23px/32px "Open Sans", "Noto Sans", sans-serif; color: #26406f;
}
.window {
  flex: 1; min-width: 0; display: flex; flex-direction: column;
  border: 1px solid #e6f0f8; border-radius: 12px 12px 0 0; padding: 0 2px 3px 13px;
  background: linear-gradient(90deg, #b8cbe2, #8cabcf 13px, #7c98bd);
}

.titlebar {
  display: flex; align-items: flex-start; height: 61px; margin: 0 -2px 0 -13px; padding-left: 99px;
  border-radius: 11px 11px 0 0; position: relative;
  background:
    linear-gradient(rgba(60, 80, 100, .4), rgba(255, 255, 255, .08) 8px, transparent 50px, rgba(255, 255, 255, .3)),
    linear-gradient(90deg, #c3cfdb 0, #a7bfd4 10%, #87a8c6 15%, #6f97bd 24%, #34669a 29%, #4678a8 33%, #2f649a 37%, #7293ae 48%, #8ca4b8 55%, #809bb4 64%, #3b6c9c 70%, #24588e 76%, #4479a8 84%, #84a5c2 89%, #9bb2c8 100%);
}
.office {
  position: absolute; left: 23px; top: 15px; z-index: 3; width: 78px; height: 78px;
  border: 2px solid #7d8ba5; border-radius: 50%;
  background: radial-gradient(circle at 50% 60%, #fff, #eceff5 50%, #b9c2d3 90%, #e8edf6);
  display: grid; place-items: center; box-shadow: 0 1px 3px rgba(30, 50, 90, .6);
}
.quick {
  width: 84px; height: 46px; margin-top: 11px; padding: 0 12px 0 16px; display: flex; align-items: center; justify-content: center;
  border: 1px solid #7f95b0; border-radius: 6px 24px 24px 0; background: rgba(200, 216, 234, .5);
}
.more { margin: 25px 40px 0 13px; }
.context {
  width: 270px; height: 59px; margin-top: 2px; padding: 18px 12px 0; color: #16202b;
  background: linear-gradient(transparent, rgba(225, 222, 90, .1) 70%, rgba(230, 224, 40, .7) 90%), linear-gradient(rgba(110, 150, 170, .7), transparent 50%), linear-gradient(90deg, #c9d3c6, #c9d3c8 45%, #83a29c 60%, #7f9c94);
}
h1 {
  margin: 0; flex: 1; padding: 16px 0 0 219px; font: inherit; font-size: 24px; line-height: 32px; color: #10202f; white-space: nowrap;
  text-shadow: 0 0 12px rgba(220, 230, 238, .9), 0 0 24px rgba(220, 230, 238, .7);
}
.controls { display: flex; height: 37px; border: 2px solid #38475a; border-top: 0; border-radius: 0 0 10px 10px; overflow: hidden; }
.controls button { width: 53px; display: grid; place-items: center; border-right: 2px solid #38475a; background: linear-gradient(#c9ced8, #b5bdca 48%, #7f8b9c 52%, #a6b0c0); }
.controls .close { width: 88px; border: 0; background: linear-gradient(#dba196, #cf7266 48%, #b32a1c 52%, #cf5544); }

.client { flex: 1; display: flex; flex-direction: column; border: 1px solid #4b6288; border-top-width: 2px; min-width: 0; }
.tabs { display: flex; height: 51px; padding: 4px 8px 0 103px; background: linear-gradient(#c4dcff, #bcd8fe); border-bottom: 1px solid #9dbbe3; }
.tab { height: 47px; padding-bottom: 3px; color: #2b4a82; }
.tab.active { width: 125px; border: 1px solid #9ab7df; border-bottom: 0; border-radius: 6px 6px 0 0; background: linear-gradient(#fff, #edf3fc 40%, #e4eefa); color: #37518a; box-shadow: 2px 0 3px rgba(90, 120, 170, .4); }
.toolTabs { display: flex; width: 272px; margin-left: 12px; border: solid #a3c2ea; border-width: 0 1px; height: 34px; }
.toolTabs .tab { width: 135px; }
.helpBtn { margin: 4px 0 0 auto; align-self: flex-start; }

.ribbon { margin: 0 2px 0 5px; padding: 4px 0 5px 4px; border: 1px solid #8fb0dc; border-top: 0; border-radius: 0 0 6px 6px; background: linear-gradient(#e2eaf4, #ccd9eb 28%, #c9d9ee 40%, #dcf0fd 92%, #e4f5ff); box-shadow: 0 1px 2px rgba(70, 100, 150, .6); display: flex; }
.group { width: 1823px; border: 1px solid #abc3df; border-radius: 5px; background: linear-gradient(#dee6f0, #cbd9ec 35%, #d3e3f5 78%, #c1d8f0 80%, #c1d8f0); box-shadow: 1px 1px 0 #eef6ff; }
.menubar { display: flex; height: 50px; padding-left: 30px; }
.menubar button { display: flex; align-items: center; gap: 9px; padding-top: 2px; color: #3a4f7c; }
.tri { width: 0; height: 0; border: 6px solid transparent; border-top: 7px solid #5e7092; border-bottom: 0; }
.toolrow { display: flex; gap: 25px; padding-left: 7px; }
.toolrow.second { padding-left: 0; }
.bar { display: flex; gap: 8px; }
.segment { display: flex; height: 47px; padding: 1px 0; border-radius: 5px; background: linear-gradient(#d9e4f3, #ccdaf0 45%, #d3e2f6 50%, #dbe8f8); overflow: hidden; box-shadow: inset 0 0 0 1px #a4bbda; }
.segment button { display: grid; place-items: center; flex: none; border-right: 1px solid #c3d3ea; }
.segment button:last-child, .segment button:has(+ .drop) { border-right: 0; }
.segment .on { background: linear-gradient(#f7c48a, #fba94a 45%, #fdc25c 55%, #ffe98a); }
.stylesBtn { width: 61px; margin-right: -25px; display: grid; place-items: center; background: #d5e2f5; }
.combos { gap: 10px; }
.combos label { position: relative; display: flex; height: 46px; border: 1px solid #c0d2ea; background: #edf3fc; }
.combos select { appearance: none; width: 100%; border: 0; background: none; font: inherit; }
.combos label .tri { position: absolute; right: 8px; top: 19px; pointer-events: none; }
.caption { text-align: center; height: 35px; padding-top: 3px; color: #5377ac; }

.workspace { flex: 1; display: flex; position: relative; min-height: 0; background: linear-gradient(#a7c0ea, #9bb9e6 12%, #7ba0d8 40%, #638dc8 62%, #6490cc); }
.swoosh { position: absolute; inset: 0; width: 100%; height: 100%; }
.page { position: relative; flex: 1; margin: 48px 141px 0 149px; padding: 206px 0 0 173px; background: #fff; border: 1px solid #4d5c74; border-bottom: 0; box-shadow: 6px 2px 8px rgba(30, 50, 90, .6); }
.sheet { position: relative; width: max-content; }
table { border-collapse: collapse; table-layout: fixed; width: 1364px; font: 28px/32px "Liberation Mono", "Courier New", monospace; color: #274a72; }
tr { height: 36px; }
tbody tr:nth-child(odd) { height: 34px; }
th, td { width: 269px; height: inherit; padding: 1px 0 0 16px; border: 2px solid #151d33; text-align: left; font-weight: 400; line-height: 28px; vertical-align: top; background: linear-gradient(#a9ccf0 0 0) 0 0 / 100% calc(100% - 2px) no-repeat #f2f8ff; }
th:first-child, td:first-child { padding-left: 15px; background: linear-gradient(#a9ccf0 0 0) 100% 0 / calc(100% - 15px) calc(100% - 2px) no-repeat #fff; }
.tail { width: 19px; padding: 0; border: 0; background-color: #fff; }
.wavy { text-decoration: underline wavy #b2356e 1px; text-underline-offset: 3px; text-decoration-skip-ink: none; }
.move { position: absolute; left: -28px; top: -28px; width: 27px; height: 27px; display: grid; place-items: center; border: 1px solid #8997b3; background: #f2f6fd; }
.resize { position: absolute; right: 9px; bottom: -13px; width: 12px; height: 12px; border: 1px solid #777; background: #fff; }
.note { margin: 0 0 0 16px; font: 29px/34px "Liberation Mono", "Courier New", monospace; color: #222; }

.menu { position: absolute; left: 782px; top: 457px; width: 412px; padding: 3px; border: 1px solid #7d8288; border-radius: 3px; background: linear-gradient(90deg, #e9edef 54px, #c4cad1 54px, #c4cad1 55px, #fafafb 55px); box-shadow: 2px 2px 3px rgba(60, 60, 60, .5); display: flex; flex-direction: column; color: #22225c; }
.menu button { position: relative; display: flex; align-items: center; height: 47px; text-align: left; }
.menu .rule { margin-top: 4px; }
.menu .rule::before { content: ""; position: absolute; left: 68px; right: 0; top: -4px; height: 2px; background: #c6c8cc; }
.glyph { width: 52px; padding-left: 8px; }
.text { margin-left: 17px; padding-bottom: 2px; flex: 1; white-space: pre; }
.text u { text-underline-offset: 4px; text-decoration-thickness: 2px; text-decoration-skip-ink: none; }
.menu .on { border: 1px solid #e8c558; border-radius: 2px; background: linear-gradient(#fffbe2, #fdecab 45%, #f7c640 50%, #f9d365 75%, #fdf0a8); color: #46301c; }
.menu .on .glyph { width: 51px; padding-left: 7px; }
.arrow { margin-right: 19px; border: 7px solid transparent; border-left: 9px solid #5a6078; border-right: 0; }

.scroll { width: 36px; display: flex; flex-direction: column; align-items: center; position: relative; padding-top: 10px; background: linear-gradient(90deg, rgba(170, 196, 238, .75), rgba(190, 212, 246, .75)); }
.split { width: 19px; height: 4px; margin-bottom: 9px; background: #2f4a7c; flex: none; }
.step { width: 32px; height: 37px; margin-top: 6px; display: grid; place-items: center; background: #88a8da; flex: none; }
.step + .lane + .step { margin-top: 0; }
.up { border: 9px solid transparent; border-top: 0; border-bottom: 9px solid #39568c; }
.down { border: 9px solid transparent; border-bottom: 0; border-top: 9px solid #39568c; }
.lane { flex: 1; width: 32px; background: linear-gradient(90deg, #9db7de, #c2d5f1); }
.thumb { height: 47%; border: 1px solid #6481b2; border-radius: 3px; background: linear-gradient(90deg, #f1f6fd, #d4e2f6 45%, #a9c2e6); display: flex; flex-direction: column; gap: 3px; align-items: center; justify-content: center; }
.thumb i { width: 17px; height: 2px; background: #5d7aab; }
.browse { height: 110px; display: flex; flex-direction: column; align-items: center; justify-content: space-between; padding: 12px 0 13px; }

.status { display: flex; height: 46px; border-top: 2px solid #55709e; background: linear-gradient(#e4eefc, #cfdff6 40%, #b7cff1 45%, #d3e3f9); color: #26355c; white-space: nowrap; }
.info { display: flex; flex: 1; }
.cell { display: flex; align-items: center; border-right: 1px solid #9fb9dd; }
.pages { width: 165px; padding-left: 18px; }
.words { width: 183px; padding-left: 20px; }
.lang { width: 387px; padding-left: 17px; gap: 36px; }
.right { display: flex; align-items: center; width: 632px; padding-left: 12px; border-left: 2px solid #50699a; background: linear-gradient(#b5cdf3, #8fb0e3 45%, #7499d3 50%, #94b5e7); }
.views { display: flex; width: 196px; height: 38px; border: 1px solid #6583b5; background: #c6d9f3; }
.views button { flex: 1; display: grid; place-items: center; border-right: 1px solid #a0badf; }
.views .on { background: linear-gradient(#f0c77e, #fbd878 50%, #ffee9c); }
output { width: 57px; margin: 0 19px; }
.round { margin-right: 4px; }
input[type="range"] { appearance: none; width: 213px; height: 34px; margin: 0 0 0 1px; background: linear-gradient(#5876ab 0 0) 0 50% / 100% 2px no-repeat, linear-gradient(#dce9fb 0 0) 0 19px / 100% 2px no-repeat; }
input[type="range"]::-webkit-slider-thumb { appearance: none; width: 20px; height: 28px; background: url("data:image/svg+xml,%3Csvg xmlns='http://www.w3.org/2000/svg' viewBox='0 0 20 28'%3E%3Cpath d='M1 1h18v17l-9 9-9-9z' fill='%23dfe9f8' stroke='%234c6596' stroke-width='2'/%3E%3Cpath d='M10 7v12' stroke='%238c9dbd' stroke-width='2'/%3E%3C/svg%3E") center / contain no-repeat; }
.grip { margin: 4px 0 0 auto; }
</style>
